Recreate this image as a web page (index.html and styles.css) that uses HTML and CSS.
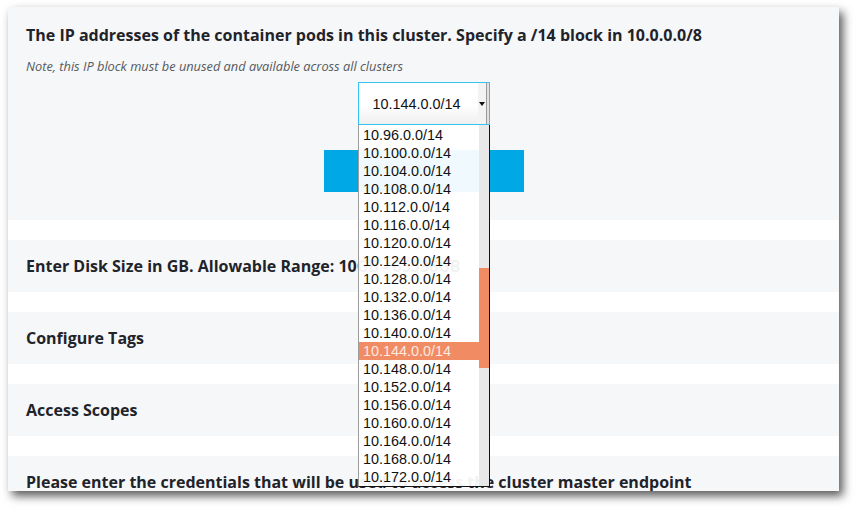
FILE: index.html
```html
<!DOCTYPE html>
<html>
<head>
<meta charset="utf-8">
<link rel="stylesheet" href="styles.css">
</head>
<body>
<div class="window">
  <section class="panel panel-main">
    <h2 class="title">The IP addresses of the container pods in this cluster. Specify a /14 block in 10.0.0.0/8</h2>
    <p class="note">Note, this IP block must be unused and available across all clusters</p>
    <div class="select-wrap">
      <div class="select">
        <span class="select-value">10.144.0.0/14</span>
        <span class="select-arrow"><svg width="6" height="4" viewBox="0 0 6 4"><path d="M0 0H6L3 4Z" fill="#111"/></svg></span>
      </div>
      <div class="dropdown">
        <ul class="options">
          <li>10.96.0.0/14</li>
          <li>10.100.0.0/14</li>
          <li>10.104.0.0/14</li>
          <li>10.108.0.0/14</li>
          <li>10.112.0.0/14</li>
          <li>10.116.0.0/14</li>
          <li>10.120.0.0/14</li>
          <li>10.124.0.0/14</li>
          <li>10.128.0.0/14</li>
          <li>10.132.0.0/14</li>
          <li>10.136.0.0/14</li>
          <li>10.140.0.0/14</li>
          <li class="selected">10.144.0.0/14</li>
          <li>10.148.0.0/14</li>
          <li>10.152.0.0/14</li>
          <li>10.156.0.0/14</li>
          <li>10.160.0.0/14</li>
          <li>10.164.0.0/14</li>
          <li>10.168.0.0/14</li>
          <li>10.172.0.0/14</li>
        </ul>
        <div class="scrollbar"><div class="thumb"></div></div>
      </div>
    </div>
    <div class="button"></div>
  </section>
  <section class="panel panel-row"><h2 class="title">Enter Disk Size in GB. Allowable Range: 10GB - 65536GB</h2></section>
  <section class="panel panel-row"><h2 class="title">Configure Tags</h2></section>
  <section class="panel panel-row"><h2 class="title">Access Scopes</h2></section>
  <section class="panel panel-row"><h2 class="title">Please enter the credentials that will be used to access the cluster master endpoint</h2></section>
</div>
</body>
</html>
```
FILE: styles.css
```css
html, body {
  margin: 0;
  padding: 0;
  background: #ffffff;
}
body {
  width: 862px;
  height: 514px;
  overflow: hidden;
}
.window {
  margin: 7px 0 0 8px;
  width: 831px;
  height: 484px;
  background: #ffffff;
  box-shadow: 4px 5px 9px rgba(0, 0, 0, 0.65);
  display: flex;
  flex-direction: column;
  gap: 20px;
  overflow: hidden;
}
.panel {
  background: #f6f7f9;
  flex-shrink: 0;
  box-sizing: border-box;
  padding: 0 18px;
}
.title {
  margin: 0;
  font-family: "Open Sans", "DejaVu Sans", sans-serif;
  font-weight: 700;
  font-size: 16px;
  line-height: 20px;
  color: #1f232a;
  white-space: nowrap;
}
.panel-main {
  height: 213px;
  padding-top: 18px;
  display: flex;
  flex-direction: column;
  align-items: stretch;
}
.note {
  margin: 13px 0 0 0;
  font-family: "Open Sans", "DejaVu Sans", sans-serif;
  font-style: italic;
  font-size: 12.8px;
  line-height: 16px;
  color: #555a60;
}
.select-wrap {
  align-self: center;
  position: relative;
  margin-top: 8px;
  margin-left: 1px;
  width: 132px;
  height: 43px;
  z-index: 2;
}
.select {
  box-sizing: border-box;
  width: 132px;
  height: 43px;
  border: 1px solid #35c3ef;
  background: linear-gradient(#ffffff, #ffffff 55%, #efefef);
  display: flex;
  align-items: center;
  position: relative;
}
.select-value {
  flex: 1;
  text-align: center;
  padding-right: 4px;
  font-family: "Liberation Sans", Arial, sans-serif;
  font-size: 14.4px;
  color: #111;
}
.select-arrow {
  width: 11px;
  align-self: stretch;
  display: flex;
  align-items: center;
  justify-content: center;
  background: linear-gradient(90deg, #f3f3f3, #f3f3f3 70%, #9a9a9a 70%, #9a9a9a 85%, #e0e0e0 85%);
}
.select-arrow svg {
  display: block;
  margin-left: -3px;
}
.dropdown {
  position: absolute;
  left: 0;
  top: 43px;
  width: 132px;
  height: 362px;
  box-sizing: border-box;
  border-left: 1px solid #9c9c9c;
  border-right: 1px solid #111;
  border-bottom: 1px solid #111;
  background: rgba(255, 255, 255, 0.94);
  display: flex;
}
.options {
  list-style: none;
  margin: 1px 0 0 0;
  padding: 0;
  flex: 1;
}
.options li {
  height: 18px;
  line-height: 18px;
  padding-left: 4px;
  font-family: "Liberation Sans", Arial, sans-serif;
  font-size: 14.4px;
  color: #111;
  white-space: nowrap;
}
.options li.selected {
  background: #f18b64;
  color: #fde9e1;
}
.scrollbar {
  width: 10px;
  background: rgba(230, 230, 230, 0.92);
  position: relative;
}
.thumb {
  position: absolute;
  left: 0;
  right: 0;
  top: 143px;
  height: 100px;
  background: #f18b64;
}
.button {
  align-self: center;
  width: 200px;
  height: 42px;
  margin-top: 25px;
  background: #00a9e6;
}
.panel-row {
  height: 52px;
  display: flex;
  align-items: center;
}
```
